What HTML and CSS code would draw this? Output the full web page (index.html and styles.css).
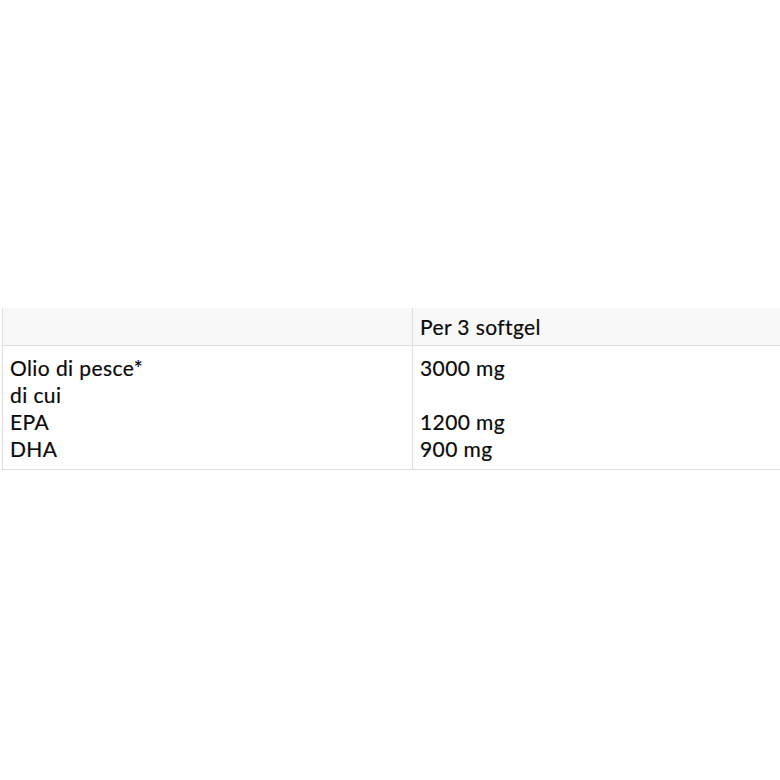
FILE: index.html
```html
<!DOCTYPE html>
<html>
<head>
<meta charset="utf-8">
<link rel="stylesheet" href="styles.css">
</head>
<body>
<div class="page">
  <table class="facts">
    <thead>
      <tr>
        <th class="col-name"></th>
        <th class="col-val">Per 3 softgel</th>
      </tr>
    </thead>
    <tbody>
      <tr>
        <td class="col-name">Olio di pesce*<br>di cui<br>EPA<br>DHA</td>
        <td class="col-val">3000 mg<br><br>1200 mg<br>900 mg</td>
      </tr>
    </tbody>
  </table>
</div>
</body>
</html>
```

FILE: styles.css
```css
html, body {
  margin: 0;
  padding: 0;
  background: #ffffff;
  overflow: hidden;
}
.page {
  width: 780px;
  height: 780px;
  padding-top: 308px;
  padding-left: 2px;
  box-sizing: border-box;
  overflow: hidden;
}
.facts {
  border-collapse: collapse;
  width: 820px;
  font-family: "Lato", "Open Sans", sans-serif;
  font-size: 21px;
  line-height: 27px;
  letter-spacing: 0.4px;
  color: #0a0a0a;
  table-layout: fixed;
  -webkit-text-stroke: 0.2px #0a0a0a;
}
.facts th, .facts td {
  text-align: left;
  vertical-align: top;
  font-weight: normal;
  padding: 5px 8px 5px 7px;
  border: 1px solid #dedede;
}
.facts thead th {
  background: #f8f8f8;
  border-top: none;
}
.facts td {
  padding: 8px 8px 7px 7px;
}
.col-name {
  width: 394px;
}
```
